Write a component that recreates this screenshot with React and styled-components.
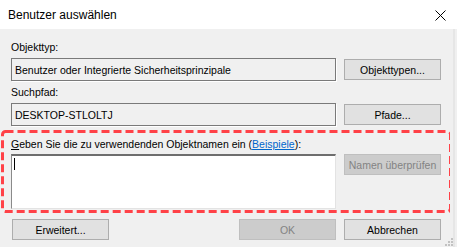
import styled, { createGlobalStyle } from "styled-components";

const GlobalStyle = createGlobalStyle`
  html, body {
    margin: 0;
    padding: 0;
    background: #f0f0f0;
  }
  body {
    font-family: "Liberation Sans", Arial, sans-serif;
    font-size: 10.5px;
    color: #000;
  }
`;

const App = () => {
  return (
    <>
      <GlobalStyle />
      <Window>
        <TitleBar>
          <Title>Benutzer auswählen</Title>
          <CloseButton>
            <svg width="11" height="11" viewBox="0 0 11 11">
              <path d="M0.5 0.5 L10.5 10.5 M10.5 0.5 L0.5 10.5" stroke="#000" strokeWidth="1" />
            </svg>
          </CloseButton>
        </TitleBar>
        <Body>
          <Label>Objekttyp:</Label>
          <Row>
            <ReadOnlyBox>Benutzer oder Integrierte Sicherheitsprinzipale</ReadOnlyBox>
            <Button>Objekttypen...</Button>
          </Row>
          <Label $top={5}>Suchpfad:</Label>
          <Row>
            <ReadOnlyBox>DESKTOP-STLOLTJ</ReadOnlyBox>
            <Button>Pfade...</Button>
          </Row>
          <Highlight>
            <DashedFrame width="100%" height="100%" preserveAspectRatio="none">
              <rect x="1.5" y="1.5" width="448" height="80" rx="3" fill="none" stroke="#ff4147" strokeWidth="3" strokeDasharray="8 4" />
            </DashedFrame>
            <Label>
              <u>G</u>eben Sie die zu verwendenden Objektnamen ein (<LinkText>Beispiele</LinkText>):
            </Label>
            <NamesRow>
              <NamesInput>
                <Caret />
              </NamesInput>
              <Button disabled>Namen überprüfen</Button>
            </NamesRow>
          </Highlight>
          <Footer>
            <Button>Erweitert...</Button>
            <ButtonGroup>
              <Button disabled>OK</Button>
              <Button>Abbrechen</Button>
            </ButtonGroup>
          </Footer>
          <Grip width="8" height="8" viewBox="0 0 8 8">
            <rect x="6" y="0" width="2" height="2" fill="#c2c2c2" />
            <rect x="3" y="3" width="2" height="2" fill="#c2c2c2" />
            <rect x="6" y="3" width="2" height="2" fill="#c2c2c2" />
            <rect x="0" y="6" width="2" height="2" fill="#c2c2c2" />
            <rect x="3" y="6" width="2" height="2" fill="#c2c2c2" />
            <rect x="6" y="6" width="2" height="2" fill="#c2c2c2" />
          </Grip>
        </Body>
      </Window>
    </>
  );
};

const Window = styled.div`
  width: 457px;
  height: 247px;
  display: flex;
  flex-direction: column;
  background: #f0f0f0;
  overflow: hidden;
`;

const TitleBar = styled.div`
  height: 29px;
  flex: none;
  display: flex;
  align-items: center;
  justify-content: space-between;
  background: #fff;
  padding: 0 11px 0 8px;
`;

const Title = styled.div`
  font-family: "Liberation Sans", Arial, sans-serif;
  font-size: 12px;
  color: #000;
`;

const CloseButton = styled.div`
  display: flex;
  align-items: center;
  margin-top: 1px;
`;

const Body = styled.div`
  position: relative;
  flex: 1;
  display: flex;
  flex-direction: column;
  padding: 12px 12px 0 11px;
  width: 455px;
  box-sizing: border-box;
  border-right: 2px solid #e6e6e6;
`;

const Label = styled.div`
  line-height: 13px;
  height: 13px;
  margin-top: ${(p) => p.$top || 0}px;
  margin-bottom: 4px;
  white-space: nowrap;
`;

const LinkText = styled.span`
  color: #0066cc;
  text-decoration: underline;
`;

const Row = styled.div`
  display: flex;
  align-items: center;
  gap: 8px;
  height: 23px;
`;

const ReadOnlyBox = styled.div`
  flex: 1;
  height: 23px;
  box-sizing: border-box;
  border: 1px solid #7a7a7a;
  box-shadow: 1px 1px 0 #ffffff;
  padding: 0 3px;
  display: flex;
  align-items: center;
  white-space: nowrap;
  overflow: hidden;
`;

const Button = styled.div`
  width: 97px;
  height: 21px;
  flex: none;
  box-sizing: border-box;
  display: flex;
  align-items: center;
  justify-content: center;
  background: ${(p) => (p.disabled ? "#cccccc" : "#e1e1e1")};
  border: 1px solid ${(p) => (p.disabled ? "#bfbfbf" : "#adadad")};
  color: ${(p) => (p.disabled ? "#838383" : "#000")};
  white-space: nowrap;
`;

const Highlight = styled.div`
  position: relative;
  margin: 4px -9px 0 -10px;
  padding: 8px 9px 5px 10px;
  height: 83px;
  box-sizing: border-box;
`;

const DashedFrame = styled.svg`
  position: absolute;
  inset: 0;
  pointer-events: none;
`;

const NamesRow = styled.div`
  display: flex;
  align-items: flex-start;
  gap: 8px;
  margin-top: -1px;
`;

const NamesInput = styled.div`
  flex: 1;
  height: 55px;
  box-sizing: border-box;
  background: #fff;
  border-top: 2px solid #6e6e6e;
  border-left: 1px solid #8a8a8a;
  border-right: 1px solid #e3e3e3;
  border-bottom: 1px solid #e3e3e3;
  padding: 2px 0 0 2px;
`;

const Caret = styled.div`
  width: 1px;
  height: 12px;
  background: #000;
`;

const Footer = styled.div`
  display: flex;
  justify-content: space-between;
  margin: 6px 0 0 1px;
`;

const ButtonGroup = styled.div`
  display: flex;
  gap: 8px;
`;

const Grip = styled.svg`
  position: absolute;
  right: 0;
  bottom: 1px;
`;

export default App;
